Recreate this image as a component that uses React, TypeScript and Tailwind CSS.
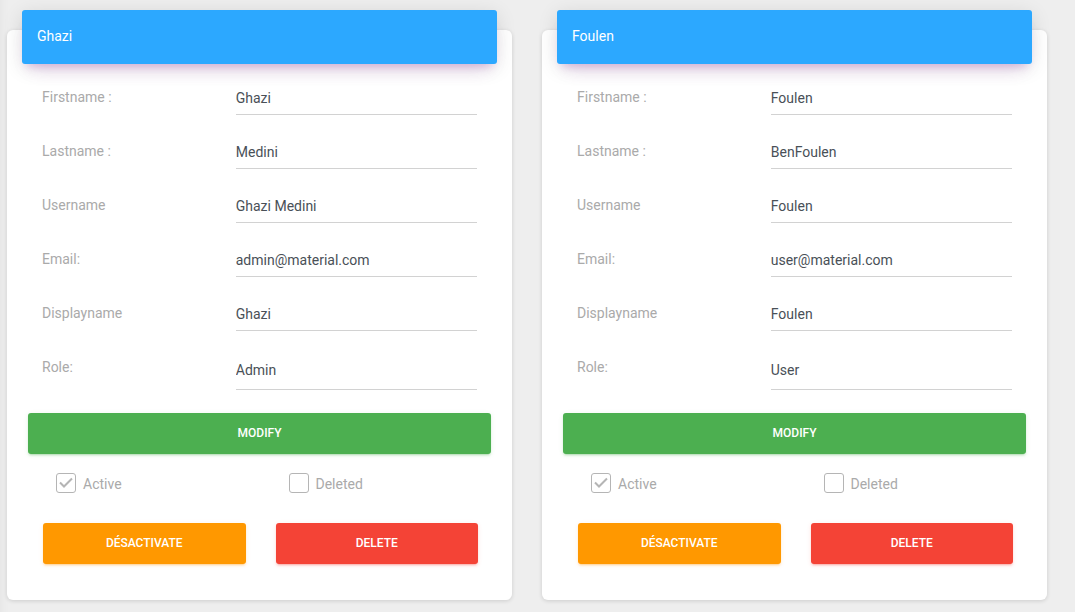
import { useState } from "react";
import type { ReactNode } from "react";

type User = {
  id: string;
  firstname: string;
  lastname: string;
  username: string;
  email: string;
  displayname: string;
  role: string;
};

const users: User[] = [
  {
    id: "ghazi",
    firstname: "Ghazi",
    lastname: "Medini",
    username: "Ghazi Medini",
    email: "admin@material.com",
    displayname: "Ghazi",
    role: "Admin",
  },
  {
    id: "foulen",
    firstname: "Foulen",
    lastname: "BenFoulen",
    username: "Foulen",
    email: "user@material.com",
    displayname: "Foulen",
    role: "User",
  },
];

const fields: { key: keyof User; label: string }[] = [
  { key: "firstname", label: "Firstname :" },
  { key: "lastname", label: "Lastname :" },
  { key: "username", label: "Username" },
  { key: "email", label: "Email:" },
  { key: "displayname", label: "Displayname" },
];

const buttonBase =
  "block h-[41px] w-full cursor-pointer rounded-[3px] pb-0.5 text-center text-xs font-medium text-white uppercase";

const controlBase =
  "block w-full appearance-none rounded-none border-b border-[#d2d2d2] bg-transparent text-sm text-[#495057] outline-none focus:border-[#9c27b0]";

function FieldRow({ id, label, children }: { id: string; label: string; children: ReactNode }) {
  return (
    <div className="flex min-h-[54px] items-start">
      <label htmlFor={id} className="w-5/12 px-[15px] pt-2 text-sm leading-5 text-[#aaaaaa]">
        {label}
      </label>
      <div className="w-7/12 px-[15px]">{children}</div>
    </div>
  );
}

function CheckField({ label, initial }: { label: string; initial: boolean }) {
  const [checked, setChecked] = useState(initial);
  return (
    <label className="flex w-1/2 items-center gap-[7px] pl-7 text-sm leading-5 text-[#aaaaaa]">
      <span className="relative block size-5">
        <input
          type="checkbox"
          checked={checked}
          onChange={(e) => setChecked(e.target.checked)}
          className="block size-5 appearance-none rounded-[3px] border border-[#b5b5b5] bg-white"
        />
        {checked && (
          <svg
            viewBox="0 0 20 20"
            className="pointer-events-none absolute inset-0 size-5"
            fill="none"
            stroke="#b5b5b5"
            strokeWidth="2"
            aria-hidden="true"
          >
            <path d="M4 9.5L8 13.5L16 5.5" />
          </svg>
        )}
      </span>
      <span className="pt-0.5">{label}</span>
    </label>
  );
}

function UserCard({ user }: { user: User }) {
  return (
    <section className="min-w-0 flex-1 rounded-md bg-white pb-9 shadow-[0_1px_4px_0_rgba(0,0,0,0.14)]">
      <header className="mx-[15px] -mt-5 rounded-[3px] bg-[#2ca8ff] px-[15px] pt-4 pb-[18px] shadow-[0_12px_20px_-10px_rgba(156,39,176,0.2),0_4px_20px_0_rgba(0,0,0,0.12),0_7px_8px_-5px_rgba(156,39,176,0.2)]">
        <h4 className="text-sm leading-5 text-white">{user.firstname}</h4>
      </header>
      <form onSubmit={(e) => e.preventDefault()}>
        <div className="px-5 pt-[15px]">
          {fields.map(({ key, label }) => (
            <FieldRow key={key} id={`${user.id}-${key}`} label={label}>
              <input
                id={`${user.id}-${key}`}
                type="text"
                defaultValue={user[key]}
                className={`${controlBase} h-9 pt-[3px]`}
              />
            </FieldRow>
          ))}
          <FieldRow id={`${user.id}-role`} label="Role:">
            <select
              id={`${user.id}-role`}
              defaultValue={user.role}
              className={`${controlBase} h-[41px] pt-px`}
            >
              <option>Admin</option>
              <option>User</option>
            </select>
          </FieldRow>
        </div>
        <div className="px-[21px] pt-2.5">
          <button
            type="submit"
            className={`${buttonBase} bg-[#4caf50] shadow-[0_2px_2px_0_rgba(76,175,80,0.14),0_3px_1px_-2px_rgba(76,175,80,0.2),0_1px_5px_0_rgba(76,175,80,0.12)]`}
          >
            Modify
          </button>
        </div>
        <div className="pr-[19px] pl-[21px]">
          <div className="flex pt-[18px]">
            <CheckField label="Active" initial={true} />
            <CheckField label="Deleted" initial={false} />
          </div>
          <div className="flex pt-[29px]">
            <div className="w-1/2 px-[15px]">
              <button
                type="button"
                className={`${buttonBase} bg-[#ff9800] shadow-[0_2px_2px_0_rgba(255,152,0,0.14),0_3px_1px_-2px_rgba(255,152,0,0.2),0_1px_5px_0_rgba(255,152,0,0.12)]`}
              >
                Désactivate
              </button>
            </div>
            <div className="w-1/2 px-[15px]">
              <button
                type="button"
                className={`${buttonBase} bg-[#f44336] shadow-[0_2px_2px_0_rgba(244,67,54,0.14),0_3px_1px_-2px_rgba(244,67,54,0.2),0_1px_5px_0_rgba(244,67,54,0.12)]`}
              >
                Delete
              </button>
            </div>
          </div>
        </div>
      </form>
    </section>
  );
}

export default function App() {
  return (
    <main className="min-h-screen bg-[#eeeeee] pt-[30px] pr-7 pb-3 pl-[7px] font-[Roboto,sans-serif] shadow-[inset_12px_0_12px_-12px_rgba(0,0,0,0.05)]">
      <div className="flex items-start gap-[30px]">
        {users.map((user) => (
          <UserCard key={user.id} user={user} />
        ))}
      </div>
    </main>
  );
}
